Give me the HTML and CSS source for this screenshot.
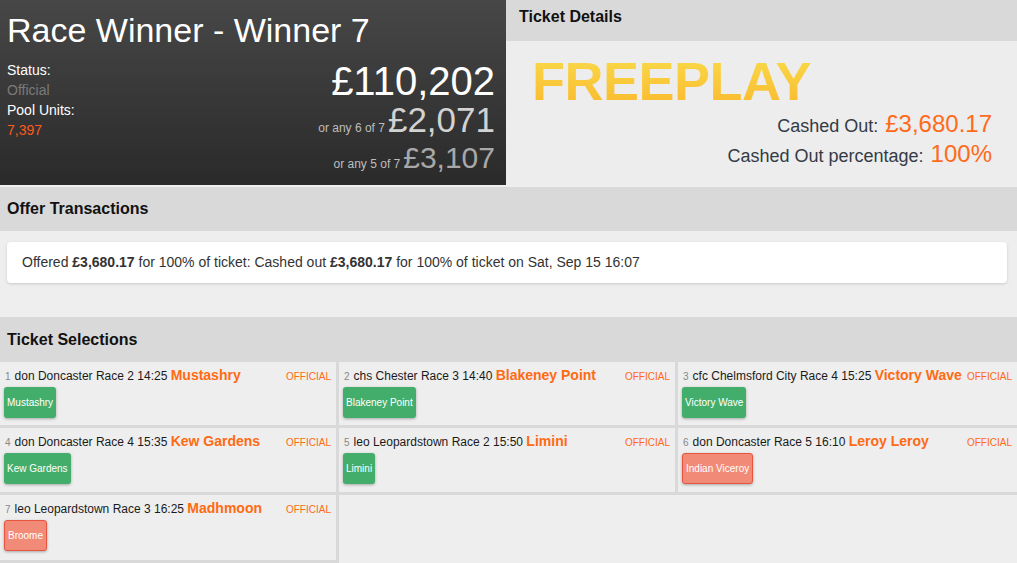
FILE: index.html
```html
<!DOCTYPE html>
<html lang="en">
<head>
    <meta charset="UTF-8">
    <meta name="viewport" content="width=device-width, initial-scale=1.0">
    <title>Race Winner - Winner 7</title>
    <link rel="stylesheet" href="styles.css">
</head>
<body>
    <div class="top">
        <div class="race-panel">
            <h1 class="race-title">Race Winner - Winner 7</h1>
            <div class="race-info">
                <div class="race-meta">
                    <div class="meta-label">Status:</div>
                    <div class="meta-status">Official</div>
                    <div class="meta-label">Pool Units:</div>
                    <div class="meta-units">7,397</div>
                </div>
                <div class="dividends">
                    <div class="div-main">£110,202</div>
                    <div class="div-six"><span class="div-note">or any 6 of 7</span>£2,071</div>
                    <div class="div-five"><span class="div-note">or any 5 of 7</span>£3,107</div>
                </div>
            </div>
        </div>
        <div class="ticket-panel">
            <h2 class="ticket-head">Ticket Details</h2>
            <div class="ticket-body">
                <div class="freeplay">FREEPLAY</div>
                <div class="cash-line">Cashed Out:<span class="cash-val">£3,680.17</span></div>
                <div class="cash-line">Cashed Out percentage:<span class="cash-val">100%</span></div>
            </div>
        </div>
    </div>

    <h2 class="section-head">Offer Transactions</h2>
    <div class="offer-body">
        <div class="offer-card">
            Offered <b>£3,680.17</b> for 100% of ticket: Cashed out <b>£3,680.17</b> for 100% of ticket on Sat, Sep 15 16:07
        </div>
    </div>

    <h2 class="section-head">Ticket Selections</h2>
    <div class="selections" id="selections"></div>

    <script>
        document.addEventListener('DOMContentLoaded', () => {
            const legs = [
                { n: 1, race: 'don Doncaster Race 2 14:25', horse: 'Mustashry', pick: 'Mustashry', won: true },
                { n: 2, race: 'chs Chester Race 3 14:40', horse: 'Blakeney Point', pick: 'Blakeney Point', won: true },
                { n: 3, race: 'cfc Chelmsford City Race 4 15:25', horse: 'Victory Wave', pick: 'Victory Wave', won: true },
                { n: 4, race: 'don Doncaster Race 4 15:35', horse: 'Kew Gardens', pick: 'Kew Gardens', won: true },
                { n: 5, race: 'leo Leopardstown Race 2 15:50', horse: 'Limini', pick: 'Limini', won: true },
                { n: 6, race: 'don Doncaster Race 5 16:10', horse: 'Leroy Leroy', pick: 'Indian Viceroy', won: false },
                { n: 7, race: 'leo Leopardstown Race 3 16:25', horse: 'Madhmoon', pick: 'Broome', won: false }
            ];
            const grid = document.getElementById('selections');

            legs.forEach(leg => {
                const cell = document.createElement('div');
                cell.className = 'leg';
                cell.innerHTML =
                    '<div class="leg-line">' +
                        '<span class="leg-title"><span class="leg-num">' + leg.n + '</span>' +
                        leg.race + ' <span class="leg-horse">' + leg.horse + '</span></span>' +
                        '<span class="leg-state">Official</span>' +
                    '</div>' +
                    '<span class="pick ' + (leg.won ? 'pick-won' : 'pick-lost') + '">' + leg.pick + '</span>';
                grid.appendChild(cell);
            });
        });
    </script>
</body>
</html>
```

FILE: styles.css
```css
html, body {
    margin: 0;
    padding: 0;
    overflow: hidden;
}

body {
    font-family: "Liberation Sans", Arial, sans-serif;
    background-color: #eeeeee;
    color: #222;
}

.top {
    display: flex;
    height: 185px;
    margin-bottom: 2px;
}

/* race summary */
.race-panel {
    width: 506px;
    padding: 11px 11px 0 7px;
    box-sizing: border-box;
    background: linear-gradient(to bottom, #474747, #2a2a2a);
    color: #fff;
}

.race-title {
    margin: 0;
    font-size: 34px;
    font-weight: normal;
    line-height: 39px;
}

.race-info {
    display: flex;
    justify-content: space-between;
    margin-top: 10px;
}

.race-meta {
    font-size: 14px;
    line-height: 20px;
}

.meta-status {
    color: #7a7a7a;
}

.meta-units {
    color: #ff5a1c;
}

.dividends {
    text-align: right;
}

.div-main {
    font-size: 40px;
    line-height: 42px;
    color: #fff;
}

.div-six {
    font-size: 35px;
    line-height: 36px;
    color: #d2d2d2;
}

.div-five {
    font-size: 30px;
    line-height: 40px;
    color: #a8a8a8;
}

.div-note {
    font-size: 12px;
    line-height: 1;
    color: #bdbdbd;
    margin-right: 3px;
}

/* ticket details */
.ticket-panel {
    flex: 1;
    background-color: #ededed;
}

.ticket-head {
    margin: 0;
    padding: 6px 13px 13px;
    font-size: 16px;
    line-height: 22px;
    background-color: #d9d9d9;
    color: #111;
}

.ticket-body {
    padding: 11px 25px 0 26px;
}

.freeplay {
    font-size: 54px;
    font-weight: bold;
    line-height: 59px;
    letter-spacing: -0.5px;
    background: linear-gradient(to bottom, #f8dc4c, #fbb72c);
    -webkit-background-clip: text;
    background-clip: text;
    color: transparent;
    display: inline-block;
}

.cash-line {
    text-align: right;
    font-size: 18px;
    height: 30px;
    line-height: 30px;
    color: #343b46;
}

.cash-val {
    font-size: 24px;
    line-height: 1;
    color: #ff6a1a;
    margin-left: 7px;
}

/* sections */
.section-head {
    margin: 0;
    padding: 0 7px;
    height: 44px;
    line-height: 44px;
    font-size: 16px;
    background-color: #d9d9d9;
    color: #111;
}

.offer-body {
    height: 86px;
    padding: 11px 10px 0 7px;
    box-sizing: border-box;
}

.offer-card {
    background: white;
    border-radius: 4px;
    box-shadow: 0 1px 3px rgba(0, 0, 0, 0.15);
    padding: 0 15px;
    height: 41px;
    line-height: 41px;
    font-size: 14px;
    color: #333;
}

.offer-body + .section-head {
    height: 45px;
    line-height: 45px;
}

.selections {
    display: grid;
    grid-template-columns: repeat(3, 1fr);
}

.leg {
    height: 66px;
    box-sizing: border-box;
    padding: 4px 5px 0 4px;
    border-right: 3px solid #d9d9d9;
    border-bottom: 3px solid #d9d9d9;
}

.leg:nth-child(3n) {
    border-right: none;
}

.leg:nth-child(n+4) {
    height: 67px;
}

.leg:nth-child(n+7) {
    height: 68px;
}

.leg-line {
    display: flex;
    justify-content: space-between;
    align-items: baseline;
    height: 20px;
    line-height: 20px;
    white-space: nowrap;
}

.leg-title {
    font-size: 12px;
    color: #1a1a1a;
}

.leg-num {
    font-size: 10px;
    color: #888;
    margin-right: 4px;
    margin-left: 1px;
}

.leg-horse {
    font-size: 14px;
    line-height: 1;
    font-weight: bold;
    color: #ff6a13;
}

.leg-state {
    font-size: 10px;
    text-transform: uppercase;
    color: #ff6a13;
}

.pick {
    display: inline-block;
    margin-top: 1px;
    height: 31px;
    line-height: 31px;
    padding: 0 3px;
    font-size: 10px;
    color: white;
    border-radius: 3px;
    box-shadow: 0 1px 3px rgba(0, 0, 0, 0.3);
    box-sizing: border-box;
}

.pick-won {
    background-color: #43ae6b;
}

.pick-lost {
    background-color: #f28a78;
    border: 1px solid #e8553e;
    line-height: 29px;
}
```
